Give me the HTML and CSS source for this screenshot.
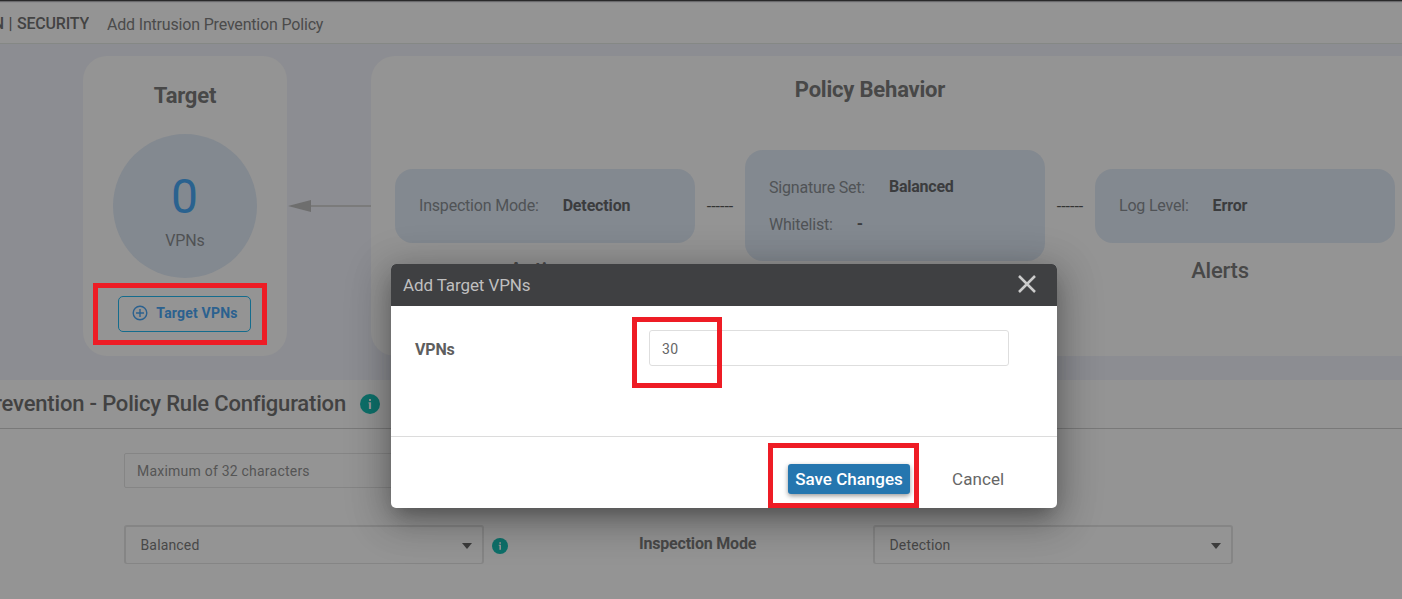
FILE: index.html
```html
<!DOCTYPE html>
<html lang="en">
<head>
<meta charset="utf-8">
<title>Add Intrusion Prevention Policy</title>
<link rel="stylesheet" href="styles.css">
</head>
<body>
<div class="page">
  <header class="topbar">
    <div class="brand"><span class="brand-text">CONFIGURATION | SECURITY</span></div>
    <div class="crumb"><span class="t-crumb">Add Intrusion Prevention Policy</span></div>
  </header>

  <section class="overview">
    <div class="target">
      <h2 class="title heavy">Target</h2>
      <div class="circle">
        <div class="count">0</div>
        <div class="count-label">VPNs</div>
      </div>
      <button class="target-btn">
        <svg width="16" height="16" viewBox="0 0 16 16" fill="none" stroke="currentColor" stroke-width="1.4"><circle cx="8" cy="8" r="6.8"/><path d="M8 4v8M4 8h8"/></svg>
        <span class="t-btn">Target VPNs</span>
      </button>
    </div>
    <svg class="arrow" width="84" height="14" viewBox="0 0 84 14"><path d="M22 7h62" stroke="#7b7b7b" stroke-width="2"/><path d="M1 7L24 1v12z" fill="#6e6e6e"/></svg>
    <div class="behavior">
      <h2 class="title heavy behavior-title">Policy Behavior</h2>
      <div class="steps">
        <div class="step">
          <div class="track">
            <div class="card"><div class="pair"><span class="key">Inspection Mode:</span><b>Detection</b></div></div>
          </div>
          <h3 class="title">Action</h3>
        </div>
        <div class="step">
          <div class="track">
            <span class="dash">------</span>
            <div class="card tall"><div class="pair"><span class="key">Signature Set:</span><b>Balanced</b></div><div class="pair"><span class="key">Whitelist:</span><b>-</b></div></div>
          </div>
        </div>
        <div class="step">
          <div class="track">
            <span class="dash">------</span>
            <div class="card"><div class="pair"><span class="key">Log Level:</span><b>Error</b></div></div>
          </div>
          <h3 class="title alerts">Alerts</h3>
        </div>
      </div>
    </div>
  </section>

  <section class="config">
    <div class="config-head">
      <div class="config-title"><span class="config-text">Intrusion Prevention - Policy Rule Configuration</span></div>
      <svg width="20" height="20" viewBox="0 0 20 20"><circle cx="10" cy="10" r="10" fill="#0e706a"/><path d="M8.5 8.2h2.6v6.8H8.9V9.6h-.4zM9 5h2v2H9z" fill="#949494"/></svg>
    </div>
    <div class="field name-field">Maximum of 32 characters</div>
    <div class="row">
      <div class="select"><span>Balanced</span><i class="caret"></i></div>
      <svg class="info" width="16" height="16" viewBox="0 0 16 16"><circle cx="8" cy="8" r="8" fill="#0e706a"/><path d="M6.8 6.8H9v5H7.4V8h-.6zM7.3 4.2H9v1.5H7.3z" fill="#949494"/></svg>
      <b class="mode-label">Inspection Mode</b>
      <div class="select"><span>Detection</span><i class="caret"></i></div>
    </div>
  </section>
</div>

<div class="modal">
  <div class="modal-head">
    <span class="modal-title">Add Target VPNs</span>
    <svg width="18" height="18" viewBox="0 0 18 18" stroke="#cbcbcb" stroke-width="2.5"><path d="M1 1l16 16M17 1L1 17"/></svg>
  </div>
  <div class="modal-body">
    <b class="vpn-label">VPNs</b>
    <div class="vpn-input">30</div>
  </div>
  <div class="modal-foot">
    <button class="save">Save Changes</button>
    <span class="cancel">Cancel</span>
  </div>
</div>

<div class="mark mark-target"></div>
<div class="mark mark-input"></div>
<div class="mark mark-save"></div>
</body>
</html>
```
FILE: styles.css
```css
* { box-sizing: border-box; }
body {
  margin: 0;
  width: 1402px;
  height: 599px;
  overflow: hidden;
  position: relative;
  font-family: Roboto, "Liberation Sans", sans-serif;
  font-size: 16px;
  color: #484848;
  background: #949494;
}
h2, h3, button { margin: 0; font-family: inherit; }
span, b, h2, h3, button { white-space: nowrap; }
.page { height: 599px; overflow: hidden; }

.topbar {
  height: 44px;
  display: flex;
  align-items: center;
  border-top: 1px solid #29292a;
  border-bottom: 1px solid #858885;
  box-shadow: inset 0 1px 0 #69696b, inset 0 2px 0 #8c8c8e;
  padding-top: 5px;
}
.brand, .config-title { display: flex; justify-content: flex-end; overflow: hidden; flex: none; }
.brand { width: 89px; font-size: 16px; font-weight: 500; letter-spacing: -.2px; word-spacing: .8px; color: #434343; line-height: 20px; margin-top: -1px; }
.crumb { margin-left: 18px; color: #4b4b4b; line-height: 20px; letter-spacing: -.18px; }

.overview {
  height: 336px;
  padding: 12px 0 24px 83px;
  display: flex;
  background: #8c8d92;
}
.title { font-weight: 500; font-size: 22px; line-height: 26px; letter-spacing: -.2px; color: #484848; text-align: center; }
.title.heavy { font-weight: 700; }
.target {
  width: 204px;
  height: 300px;
  flex: none;
  border-radius: 24px;
  background: #949494;
  display: flex;
  flex-direction: column;
  align-items: center;
  padding-top: 27px;
}
.circle {
  width: 144px;
  height: 144px;
  margin-top: 25px;
  border-radius: 50%;
  background: #838990;
  text-align: center;
  padding-top: 38px;
}
.count { font-size: 48px; line-height: 50px; color: #2a628f; padding-right: 1px; }
.count-label { font-size: 16px; line-height: 20px; margin-top: 9px; letter-spacing: -.1px; color: #505254; }
.target-btn {
  width: 133px;
  height: 36px;
  margin: 18px 1px 0 0;
  padding: 0 0 1px 1px;
  display: flex;
  align-items: center;
  justify-content: center;
  gap: 8px;
  border: 1px solid #146c8d;
  border-radius: 5px;
  background: none;
  color: #2b618f;
  font-size: 14px;
  font-weight: 700;
  letter-spacing: .2px;
}
.t-btn { padding-bottom: 1px; }
.target-btn svg { margin-bottom: 1px; }
.arrow { flex: none; margin-top: 143px; }
.behavior {
  flex: none;
  width: 1060px;
  height: 300px;
  border-radius: 24px;
  background: #949494;
  padding: 21px 0 0 24px;
}
.behavior-title { width: 950px; }
.steps { display: flex; margin-top: 47px; }
.step { width: 350px; }
.step:first-child { width: 300px; }
.step:first-child .title { padding-right: 10px; }
.track { height: 111px; display: flex; align-items: center; justify-content: flex-end; }
.dash { width: 50px; text-align: center; font-size: 16px; color: #333; padding-top: 1px; }
.card {
  width: 300px;
  height: 74px;
  border-radius: 18px;
  background: #838990;
  padding: 0 24px;
  display: flex;
  flex-direction: column;
  justify-content: center;
  gap: 15px;
}
.card.tall { height: 111px; }
.pair { display: flex; align-items: center; gap: 24px; line-height: 20px; }
.key { color: #505356; letter-spacing: -.2px; padding-top: 1px; }
.tall .key { padding-top: 2px; }
.pair b { color: #3b3c3e; letter-spacing: -.15px; padding-top: 1px; }
.tall .pair b { letter-spacing: -.25px; padding-top: 0; }
.step .title { margin-top: -3px; }

.config-head { height: 49px; display: flex; align-items: center; border-bottom: 1px solid #797979; }
.config-title { width: 346px; margin-right: 14px; font-size: 22px; font-weight: 500; letter-spacing: -.18px; line-height: 28px; color: #424242; }
.field {
  width: 360px;
  height: 35px;
  margin: 24px 0 0 124px;
  border: 1px solid #858585;
  border-radius: 2px;
  padding-left: 12px;
  font-size: 14px;
  letter-spacing: .22px;
  line-height: 34px;
  color: #555;
}
.row { display: flex; align-items: center; margin: 37px 0 0 124px; }
.select {
  width: 360px;
  height: 39px;
  border: 2px solid #858585;
  border-bottom-width: 1px;
  border-radius: 3px;
  padding: 0 10px 0 14.5px;
  display: flex;
  align-items: center;
  justify-content: space-between;
  font-size: 14px;
  letter-spacing: .15px;
}
.caret { border: 5.5px solid transparent; border-top: 6px solid #3c3c3c; border-bottom: 0; margin: 2px 0 0 0; }
.info { margin: 3px 0 0 7.5px; }
.mode-label { width: 234px; margin-left: 131.5px; margin-top: -2px; letter-spacing: -.2px; }

.modal {
  position: absolute;
  left: 391px;
  top: 264px;
  width: 666px;
  height: 244px;
  border-radius: 5px;
  overflow: hidden;
  background: #fff;
  box-shadow: 0 11px 15px -7px rgba(0,0,0,.2), 0 9px 46px 8px rgba(0,0,0,.12), 0 10px 34px 3px rgba(0,0,0,.26);
}
.modal-head {
  height: 42px;
  padding: 0 21px 0 12px;
  display: flex;
  align-items: center;
  justify-content: space-between;
  background: #3f4042;
}
.modal-title { color: #bfbfbf; font-size: 17px; letter-spacing: -.1px; }
.modal-head svg { margin-top: -3px; }
.modal-body {
  height: 131px;
  padding: 24px;
  display: flex;
  align-items: flex-start;
  border-bottom: 1px solid #dcdcdc;
}
.vpn-label { width: 234px; line-height: 20px; margin-top: 10px; color: #5e5e5e; letter-spacing: -.15px; }
.vpn-input {
  width: 360px;
  height: 36px;
  border: 1px solid #dedede;
  border-radius: 3px;
  padding-left: 12px;
  line-height: 37px;
  font-size: 14px;
  letter-spacing: .3px;
  color: #666;
}
.modal-foot { padding: 27px 0 0 397px; display: flex; align-items: center; }
.save {
  width: 122px;
  height: 30px;
  padding: 0;
  border: 0;
  border-radius: 3px;
  background: #2576af;
  color: #fff;
  font-size: 17px;
  font-weight: 500;
  box-shadow: 0 2px 5px rgba(0,0,0,.4);
}
.cancel { margin-left: 42px; font-size: 17px; letter-spacing: .1px; color: #666; }

.mark { position: absolute; border: 5px solid #ee1c25; }
.mark-target { left: 93px; top: 283px; width: 174px; height: 62px; }
.mark-input { left: 632px; top: 317px; width: 90px; height: 71px; }
.mark-save { left: 768px; top: 443px; width: 151px; height: 65px; }
```
